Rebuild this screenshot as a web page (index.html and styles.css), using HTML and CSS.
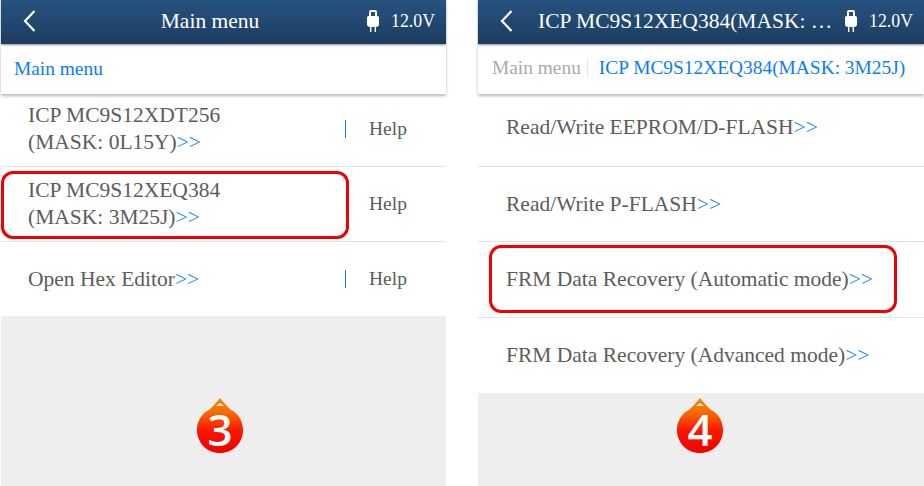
FILE: index.html
```html
<!DOCTYPE html>
<html lang="en">
<head>
<meta charset="utf-8">
<title>Main menu</title>
<link rel="stylesheet" href="styles.css">
</head>
<body>
<main class="page">
  <section class="screen">
    <header class="bar">
      <svg class="back" viewBox="0 0 14 24"><path d="M12 2 2.500 12 12 22"/></svg>
      <h1 class="title title-center">Main menu</h1>
      <svg class="plug" viewBox="0 0 12 22"><path fill-rule="evenodd" d="M4 0h4q2 0 2 2v4h.5Q12 6 12 7.500V14q0 3-3 3v5H7.600v-5H4.400v5H3v-5q-3 0-3-3V7.500Q0 6 1.500 6H2V2q0-2 2-2zM4 2v4h4V2z"/></svg>
      <span class="volt">12.0V</span>
    </header>
    <nav class="crumbs crumbs-a"><span class="crumb-on">Main menu</span></nav>
    <ul class="list list-a">
      <li class="row row-help"><span class="label">ICP MC9S12XDT256<br>(MASK: 0L15Y)<b>&gt;&gt;</b></span><span class="help">Help</span></li>
      <li class="row row-help"><span class="label">ICP MC9S12XEQ384<br>(MASK: 3M25J)<b>&gt;&gt;</b></span><span class="help help-faint">Help</span><i class="callout callout-a"></i></li>
      <li class="row row-help"><span class="label">Open Hex Editor<b>&gt;&gt;</b></span><span class="help">Help</span></li>
    </ul>
    <div class="fill fill-a">
      <div class="badge">
        <svg class="drop" viewBox="0 0 46 55"><defs><linearGradient id="g3" x1="0" y1="0" x2="0" y2="1"><stop offset="0" stop-color="#f08a00"/><stop offset=".25" stop-color="#f86c00"/><stop offset=".6" stop-color="#fb1400"/><stop offset="1" stop-color="#f40000"/></linearGradient></defs><path fill="url(#g3)" d="M23 0C27 5 30 8 34 12 41 15 46 23 46 32 46 45 36 55 23 55 10 55 0 45 0 32 0 23 5 15 12 12 16 8 19 5 23 0z"/><path fill="#fff3dc" d="M23 5 27 8H19z"/></svg>
        <span class="num">3</span>
      </div>
    </div>
  </section>
  <section class="screen">
    <header class="bar">
      <svg class="back" viewBox="0 0 14 24"><path d="M12 2 2.500 12 12 22"/></svg>
      <h1 class="title title-left">ICP MC9S12XEQ384(MASK: …</h1>
      <svg class="plug" viewBox="0 0 12 22"><path fill-rule="evenodd" d="M4 0h4q2 0 2 2v4h.5Q12 6 12 7.500V14q0 3-3 3v5H7.600v-5H4.400v5H3v-5q-3 0-3-3V7.500Q0 6 1.500 6H2V2q0-2 2-2zM4 2v4h4V2z"/></svg>
      <span class="volt">12.0V</span>
    </header>
    <nav class="crumbs crumbs-b"><span class="crumb-off">Main menu</span><span class="crumb-on">ICP MC9S12XEQ384(MASK: 3M25J)</span></nav>
    <ul class="list list-b">
      <li class="row"><span class="label">Read/Write EEPROM/D-FLASH<b>&gt;&gt;</b></span></li>
      <li class="row"><span class="label">Read/Write P-FLASH<b>&gt;&gt;</b></span></li>
      <li class="row"><span class="label">FRM Data Recovery (Automatic mode)<b>&gt;&gt;</b></span><i class="callout callout-b"></i></li>
      <li class="row"><span class="label">FRM Data Recovery (Advanced mode)<b>&gt;&gt;</b></span></li>
    </ul>
    <div class="fill fill-b">
      <div class="badge">
        <svg class="drop" viewBox="0 0 46 55"><defs><linearGradient id="g4" x1="0" y1="0" x2="0" y2="1"><stop offset="0" stop-color="#f08a00"/><stop offset=".25" stop-color="#f86c00"/><stop offset=".6" stop-color="#fb1400"/><stop offset="1" stop-color="#f40000"/></linearGradient></defs><path fill="url(#g4)" d="M23 0C27 5 30 8 34 12 41 15 46 23 46 32 46 45 36 55 23 55 10 55 0 45 0 32 0 23 5 15 12 12 16 8 19 5 23 0z"/><path fill="#fff3dc" d="M23 5 27 8H19z"/></svg>
        <span class="num">4</span>
      </div>
    </div>
  </section>
</main>
</body>
</html>
```

FILE: styles.css
```css
* { box-sizing: border-box; }
html, body { margin: 0; height: 100%; background: #fff; overflow: hidden; }
body { font-family: "Liberation Serif", "Times New Roman", serif; }
.page { display: grid; grid-template-columns: 445px 446px; column-gap: 32px; height: 486px; padding-left: 1px; }
.screen { display: flex; flex-direction: column; height: 486px; min-width: 0; }

.bar { height: 44px; flex: none; display: flex; align-items: center; color: #fff; padding: 0 11px 2px 21px;
  background: linear-gradient(#265380, #1c3c60); box-shadow: 0 1px 2px rgba(0,0,0,.45); position: relative; z-index: 2; }
.back { width: 15px; height: 24px; flex: none; }
.back path { fill: none; stroke: #fff; stroke-width: 2.200; }
.title { margin: 0; font-weight: 400; font-size: 21.500px; white-space: nowrap; min-width: 0; }
.title-center { flex: 1; text-align: center; padding-left: 16px; }
.title-left { flex: 1; padding-left: 24px; }
.plug { width: 12px; height: 22px; fill: #fff; flex: none; margin-right: 12px; }
.volt { font-size: 17.800px; flex: none; }

.crumbs { height: 50px; flex: none; display: flex; align-items: center; padding-left: 13px; font-size: 19.400px;
  box-shadow: 0 2px 3px rgba(0,0,0,.28); position: relative; z-index: 1; background: #fff; }
.crumbs-b { padding-left: 14px; padding-bottom: 2px; }
.crumb-on { color: #0a7dfa; }
.crumb-off { color: #aaa; padding-right: 6px; margin-right: 11px; border-right: 1px solid #d5e6f8; line-height: 18px; }

.list { list-style: none; margin: 0; padding: 0; }
.row { height: 75px; display: flex; align-items: center; justify-content: space-between; padding-left: 27px;
  border-bottom: 1px solid #e4e4e4; font-size: 21.500px; line-height: 27px; color: #5c5c5c; position: relative; }
.row:first-child { height: 73px; }
.row:last-child { border-bottom: 0; }
.list-a .row:first-child { padding-bottom: 3px; }
.list-a .row:last-child { height: 74px; }
.list-b .row { padding-left: 28px; }
.list-b .row:first-child { padding-bottom: 6px; }
.list-b .row:nth-child(3) { height: 76px; }
.label b { font-weight: 400; color: #2a8cf5; }
.help { width: 101px; flex: none; padding-left: 23px; border-left: 1px solid #1a7ff0; font-size: 19.500px; line-height: 18px; }
.help-faint { border-left-color: #e9f2fb; }

.callout { position: absolute; border: 3px solid #f00000; border-radius: 12px; display: block; }
.callout-a { left: 0; top: 4px; width: 348px; height: 68px; }
.callout-b { left: 11px; top: 3px; width: 408px; height: 68px; }

.fill { flex: 1; background: #eee; display: flex; justify-content: center; }
.fill-a { padding-top: 82px; padding-right: 7px; }
.fill-b { padding-top: 5px; padding-right: 2px; }
.badge { width: 46px; height: 55px; flex: none; position: relative; }
.drop { display: block; width: 46px; height: 55px; }
.num { position: absolute; left: 0; right: 0; top: 9px; text-align: center; color: #fff; font-family: "Open Sans", "Liberation Sans", sans-serif; font-weight: 600; font-size: 44px; line-height: 44px; }
```
